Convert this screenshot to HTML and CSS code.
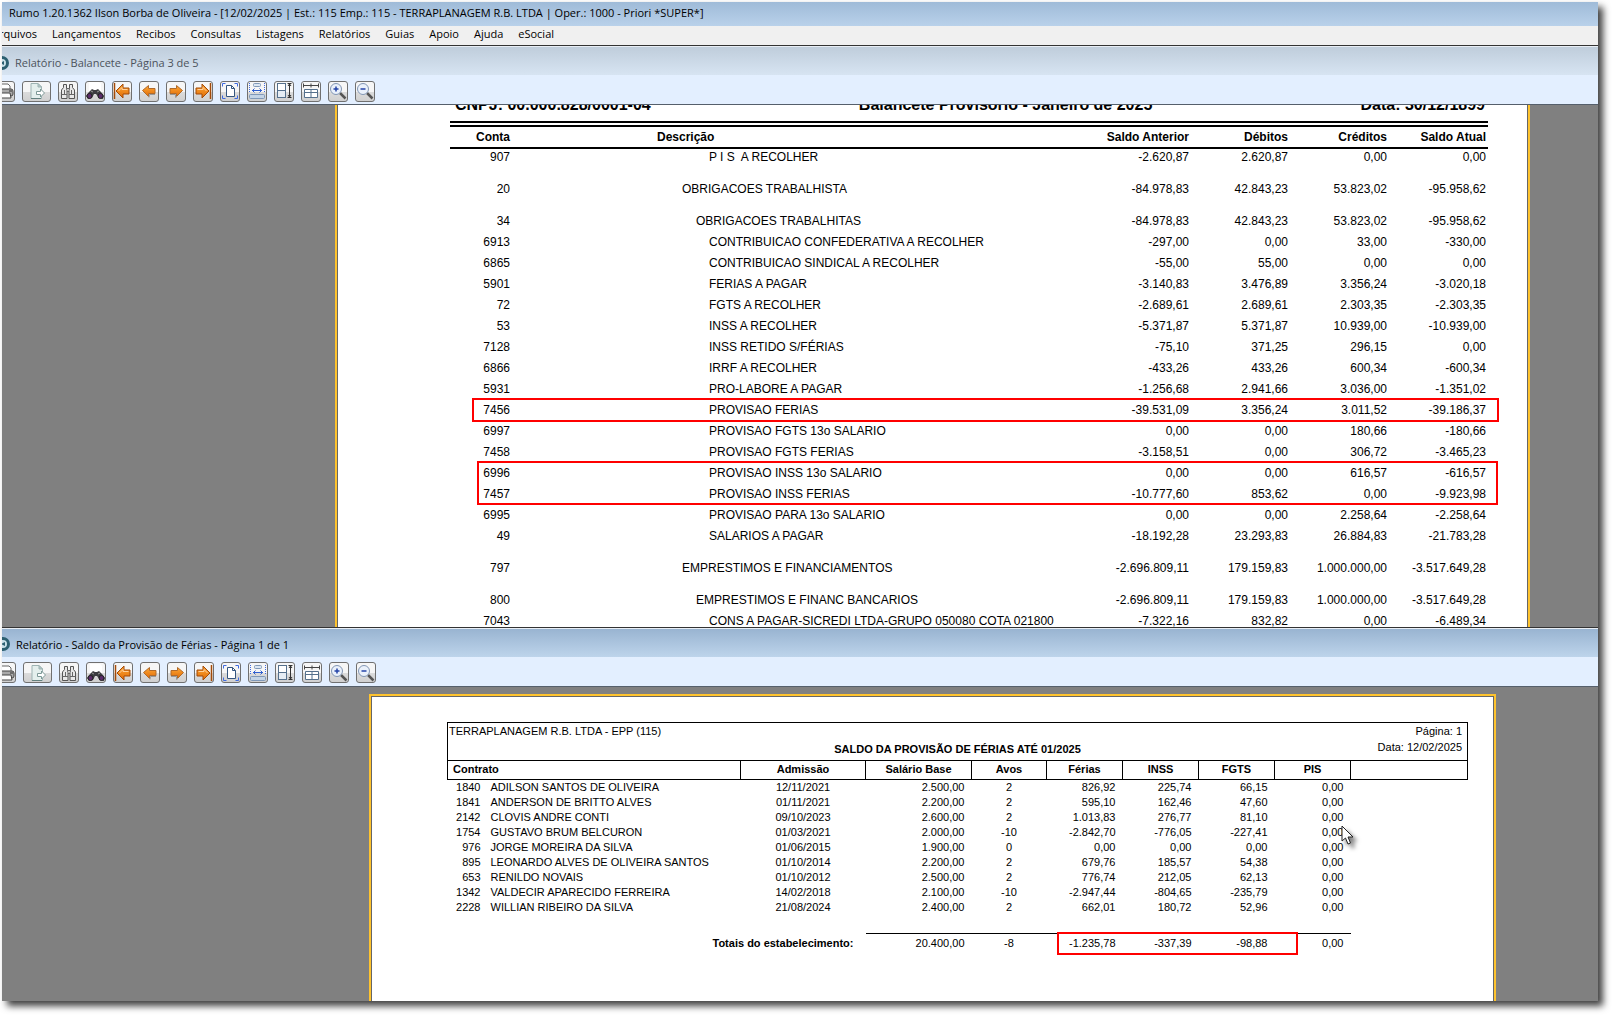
FILE: index.html
```html
<!DOCTYPE html>
<html lang="pt-BR">
<head>
  <meta charset="UTF-8">
  <title>Rumo 1.20.1362</title>
  <meta name="viewport" content="width=device-width, initial-scale=1.0">
  <link rel="stylesheet" href="styles.css">
</head>
<body>

<!-- Toolbar icons, shared by both report windows -->
<svg class="sprite" aria-hidden="true">
  <defs>
    <linearGradient id="orange" x1="0" y1="0" x2="0" y2="1">
      <stop offset="0" stop-color="#ffa836"/>
      <stop offset="1" stop-color="#e06c06"/>
    </linearGradient>
    <symbol id="i-print" viewBox="0 0 18 18">
      <path d="M4 7V2h8l2 2v3" fill="#fff" stroke="#666"/>
      <rect x="1" y="7" width="16" height="7" rx="2" fill="#aaa" stroke="#444"/>
      <path d="M4 11h10l1 5H3z" fill="#fff" stroke="#444"/>
      <path d="M13 9h3" stroke="#333"/>
    </symbol>
    <symbol id="i-export" viewBox="0 0 18 18">
      <path d="M3 1.500h7l3.500 3.500v11.500H3z" fill="#e4efed" stroke="#9db3b3"/>
      <path d="M10 1.500v3.500h3.500z" fill="#b5cac9" stroke="#9db3b3"/>
      <path d="M3 16.500h10" stroke="#63817f"/>
      <path d="M8.500 9.500h4v-2.500l4 4-4 4v-2.500h-4z" fill="#fff" stroke="#7d9997"/>
    </symbol>
    <symbol id="i-find" viewBox="0 0 18 18">
      <path d="M4.500 2.500h3v4l.5 2v8H2.500V8l2-2.500z" fill="#e8e8e8" stroke="#555"/>
      <path d="M13.500 2.500h-3v4l-.5 2v8h5.500V8l-2-2.500z" fill="#e8e8e8" stroke="#555"/>
      <path d="M7.500 6.500h3M8 9.500h2M2.500 12.500H8M10 12.500h5.500M5.500 8v4M12.500 8v4" stroke="#666"/>
    </symbol>
    <symbol id="i-findnext" viewBox="0 0 18 18">
      <path d="M3 0h10l2 2v7H3z" fill="#fff"/>
      <path d="M6 7l2 1h2l2-1 3 3 3 4-1 3-4-1-3-4H8l-2 4-4 1-2-3 3-4z" fill="#3c3c40"/>
      <path d="M5 9l2 1M11 10l2-1" stroke="#999"/>
      <ellipse cx="3.500" cy="14" rx="2.500" ry="2.500" fill="#5b2b6b" stroke="#222"/>
      <ellipse cx="14.500" cy="14" rx="2.500" ry="2.500" fill="#5b2b6b" stroke="#222"/>
    </symbol>
    <symbol id="i-first" viewBox="0 0 18 18">
      <path d="M1.500 1v16" stroke="#a34a08" stroke-width="1.500"/>
      <path d="M3 9l7-7v4h6v6h-6v4z" fill="url(#orange)" stroke="#a34a08"/>
      <path d="M5.500 9L9 5.500V7.500h5.500" fill="none" stroke="#ffd09a"/>
    </symbol>
    <symbol id="i-prev" viewBox="0 0 18 18">
      <path d="M2.500 8.500l6-5v3H15v5H8.500v3z" fill="url(#orange)" stroke="#b06a2a"/>
      <path d="M9 15.500l.5-3H15" fill="none" stroke="#999"/>
    </symbol>
    <symbol id="i-next" viewBox="0 0 18 18">
      <path d="M15.500 8.500l-6-5v3H3v5h6.500v3z" fill="url(#orange)" stroke="#b06a2a"/>
      <path d="M3 12.500h5.500v3l1.500-1" fill="none" stroke="#999"/>
    </symbol>
    <symbol id="i-last" viewBox="0 0 18 18">
      <path d="M16.500 1v16" stroke="#a34a08" stroke-width="1.500"/>
      <path d="M15 9L8 2v4H2v6h6v4z" fill="url(#orange)" stroke="#a34a08"/>
      <path d="M3.500 7.500H9V5.500L12.500 9" fill="none" stroke="#ffd09a"/>
    </symbol>
    <symbol id="i-page" viewBox="0 0 18 18">
      <path d="M5.500 3.500h5l3 3v8h-8z" fill="#fff" stroke="#34557f"/>
      <path d="M10.500 3.500v3h3" fill="none" stroke="#34557f"/>
      <path d="M1.500 4.500v-3h3M13.500 1.500h3v3M1.500 13.500v3h3M13.500 16.500h3v-3" fill="none" stroke="#3f6be0"/>
    </symbol>
    <symbol id="i-width" viewBox="0 0 18 18">
      <rect x="5.500" y="1.500" width="7" height="3" rx="1" fill="#dbe6f2" stroke="#7f98b8"/>
      <rect x="1.500" y="12.500" width="15" height="4" rx="1" fill="#c4d4e6" stroke="#7f98b8"/>
      <path d="M1.500 1v10M16.500 1v10" stroke="#3f6be0" stroke-dasharray="1 1"/>
      <path d="M4 8.500h10M6.500 6.500l-2 2 2 2M11.500 6.500l2 2-2 2" fill="none" stroke="#2f5fd0"/>
    </symbol>
    <symbol id="i-height" viewBox="0 0 18 18">
      <rect x="2.500" y="1.500" width="8" height="7" fill="#fff" stroke="#55708c"/>
      <rect x="2.500" y="8.500" width="8" height="7" fill="#e6edf4" stroke="#55708c"/>
      <path d="M14.500 2v13M12.500 1.500h4M12.500 15.500h4M13 4l1.500-2L16 4M13 13l1.500 2 1.500-2" fill="none" stroke="#333"/>
    </symbol>
    <symbol id="i-grid" viewBox="0 0 18 18">
      <path d="M2 3.500h14M1.500 1.500v4M16.500 1.500v4M9 1.500v4" stroke="#444"/>
      <path d="M2.500 7.500h13v8h-13z" fill="#fff" stroke="#55708c"/>
      <path d="M9 7.500v8M2.500 10.500h13" stroke="#55708c"/>
    </symbol>
    <symbol id="i-zoomin" viewBox="0 0 18 18">
      <path d="M11 11l5.500 5.500" stroke="#555" stroke-width="2.500"/>
      <circle cx="7" cy="7" r="5.500" fill="#eaf1fb" stroke="#8296b4"/>
      <path d="M4.500 7h5M7 4.500v5" stroke="#2443a8" stroke-width="1.500"/>
    </symbol>
    <symbol id="i-zoomout" viewBox="0 0 18 18">
      <path d="M11 11l5.500 5.500" stroke="#555" stroke-width="2.500"/>
      <circle cx="7" cy="7" r="5.500" fill="#eaf1fb" stroke="#8296b4"/>
      <path d="M4.500 7h5" stroke="#2443a8" stroke-width="1.500"/>
    </symbol>
    <symbol id="i-app" viewBox="0 0 14 14">
      <circle cx="7" cy="7" r="5.500" fill="#c9e0e8" stroke="#2c5f70" stroke-width="3"/>
      <path d="M5 7l4-2v4z" fill="#2c5f70"/>
    </symbol>
  </defs>
</svg>

<div class="app">
  <header class="app-title">Rumo 1.20.1362 Ilson Borba de Oliveira - [12/02/2025 | Est.: 115 Emp.: 115 - TERRAPLANAGEM R.B. LTDA | Oper.: 1000 - Priori *SUPER*]</header>

  <nav class="menu">
    <button type="button">Arquivos</button>
    <button type="button">Lançamentos</button>
    <button type="button">Recibos</button>
    <button type="button">Consultas</button>
    <button type="button">Listagens</button>
    <button type="button">Relatórios</button>
    <button type="button">Guias</button>
    <button type="button">Apoio</button>
    <button type="button">Ajuda</button>
    <button type="button">eSocial</button>
  </nav>

  <!-- Balancete -->
  <section class="window balancete">
    <h2 class="window-title inactive"><svg><use href="#i-app"/></svg>Relatório - Balancete - Página 3 de 5</h2>
    <div class="toolbar">
      <button type="button" aria-label="Imprimir"><svg><use href="#i-print"/></svg></button>
      <button type="button" class="wide" aria-label="Exportar"><svg><use href="#i-export"/></svg></button>
      <button type="button" aria-label="Localizar"><svg><use href="#i-find"/></svg></button>
      <button type="button" aria-label="Localizar próximo"><svg><use href="#i-findnext"/></svg></button>
      <button type="button" aria-label="Primeira página"><svg><use href="#i-first"/></svg></button>
      <button type="button" aria-label="Página anterior"><svg><use href="#i-prev"/></svg></button>
      <button type="button" aria-label="Próxima página"><svg><use href="#i-next"/></svg></button>
      <button type="button" aria-label="Última página"><svg><use href="#i-last"/></svg></button>
      <button type="button" aria-label="Página inteira"><svg><use href="#i-page"/></svg></button>
      <button type="button" aria-label="Ajustar largura"><svg><use href="#i-width"/></svg></button>
      <button type="button" aria-label="Ajustar altura"><svg><use href="#i-height"/></svg></button>
      <button type="button" aria-label="Várias páginas"><svg><use href="#i-grid"/></svg></button>
      <button type="button" aria-label="Aumentar zoom"><svg><use href="#i-zoomin"/></svg></button>
      <button type="button" aria-label="Diminuir zoom"><svg><use href="#i-zoomout"/></svg></button>
    </div>
    <div class="viewer">
      <div class="page">
        <div class="page-head">
          <span>CNPJ: 00.000.828/0001-04</span>
          <span>Balancete Provisorio - Janeiro de 2025</span>
          <span>Data: 30/12/1899</span>
        </div>
        <div class="sheet">
          <table class="accounts">
            <thead>
              <tr><th class="conta">Conta</th><th class="desc">Descrição</th><th class="valor">Saldo Anterior</th><th class="valor">Débitos</th><th class="valor">Créditos</th><th class="valor ultimo">Saldo Atual</th></tr>
            </thead>
            <tbody>
              <tr><td>907</td><td>P I S&nbsp; A RECOLHER</td><td>-2.620,87</td><td>2.620,87</td><td>0,00</td><td>0,00</td></tr>
              <tr class="grupo nivel1"><td>20</td><td>OBRIGACOES TRABALHISTA</td><td>-84.978,83</td><td>42.843,23</td><td>53.823,02</td><td>-95.958,62</td></tr>
              <tr class="grupo nivel2"><td>34</td><td>OBRIGACOES TRABALHITAS</td><td>-84.978,83</td><td>42.843,23</td><td>53.823,02</td><td>-95.958,62</td></tr>
              <tr><td>6913</td><td>CONTRIBUICAO CONFEDERATIVA A RECOLHER</td><td>-297,00</td><td>0,00</td><td>33,00</td><td>-330,00</td></tr>
              <tr><td>6865</td><td>CONTRIBUICAO SINDICAL A RECOLHER</td><td>-55,00</td><td>55,00</td><td>0,00</td><td>0,00</td></tr>
              <tr><td>5901</td><td>FERIAS A PAGAR</td><td>-3.140,83</td><td>3.476,89</td><td>3.356,24</td><td>-3.020,18</td></tr>
              <tr><td>72</td><td>FGTS A RECOLHER</td><td>-2.689,61</td><td>2.689,61</td><td>2.303,35</td><td>-2.303,35</td></tr>
              <tr><td>53</td><td>INSS A RECOLHER</td><td>-5.371,87</td><td>5.371,87</td><td>10.939,00</td><td>-10.939,00</td></tr>
              <tr><td>7128</td><td>INSS RETIDO S/FÉRIAS</td><td>-75,10</td><td>371,25</td><td>296,15</td><td>0,00</td></tr>
              <tr><td>6866</td><td>IRRF A RECOLHER</td><td>-433,26</td><td>433,26</td><td>600,34</td><td>-600,34</td></tr>
              <tr><td>5931</td><td>PRO-LABORE A PAGAR</td><td>-1.256,68</td><td>2.941,66</td><td>3.036,00</td><td>-1.351,02</td></tr>
              <tr><td>7456</td><td>PROVISAO FERIAS</td><td>-39.531,09</td><td>3.356,24</td><td>3.011,52</td><td>-39.186,37</td></tr>
              <tr><td>6997</td><td>PROVISAO FGTS 13o SALARIO</td><td>0,00</td><td>0,00</td><td>180,66</td><td>-180,66</td></tr>
              <tr><td>7458</td><td>PROVISAO FGTS FERIAS</td><td>-3.158,51</td><td>0,00</td><td>306,72</td><td>-3.465,23</td></tr>
              <tr><td>6996</td><td>PROVISAO INSS 13o SALARIO</td><td>0,00</td><td>0,00</td><td>616,57</td><td>-616,57</td></tr>
              <tr><td>7457</td><td>PROVISAO INSS FERIAS</td><td>-10.777,60</td><td>853,62</td><td>0,00</td><td>-9.923,98</td></tr>
              <tr><td>6995</td><td>PROVISAO PARA 13o SALARIO</td><td>0,00</td><td>0,00</td><td>2.258,64</td><td>-2.258,64</td></tr>
              <tr><td>49</td><td>SALARIOS A PAGAR</td><td>-18.192,28</td><td>23.293,83</td><td>26.884,83</td><td>-21.783,28</td></tr>
              <tr class="grupo nivel1"><td>797</td><td>EMPRESTIMOS E FINANCIAMENTOS</td><td>-2.696.809,11</td><td>179.159,83</td><td>1.000.000,00</td><td>-3.517.649,28</td></tr>
              <tr class="grupo nivel2"><td>800</td><td>EMPRESTIMOS E FINANC BANCARIOS</td><td>-2.696.809,11</td><td>179.159,83</td><td>1.000.000,00</td><td>-3.517.649,28</td></tr>
              <tr><td>7043</td><td>CONS A PAGAR-SICREDI LTDA-GRUPO 050080 COTA 021800</td><td>-7.322,16</td><td>832,82</td><td>0,00</td><td>-6.489,34</td></tr>
            </tbody>
          </table>
          <div class="mark mark-ferias"></div>
          <div class="mark mark-inss"></div>
        </div>
      </div>
    </div>
  </section>

  <!-- Saldo da provisão de férias -->
  <section class="window provisao">
    <h2 class="window-title"><svg><use href="#i-app"/></svg>Relatório - Saldo da Provisão de Férias - Página 1 de 1</h2>
    <div class="toolbar">
      <button type="button" aria-label="Imprimir"><svg><use href="#i-print"/></svg></button>
      <button type="button" class="wide" aria-label="Exportar"><svg><use href="#i-export"/></svg></button>
      <button type="button" aria-label="Localizar"><svg><use href="#i-find"/></svg></button>
      <button type="button" aria-label="Localizar próximo"><svg><use href="#i-findnext"/></svg></button>
      <button type="button" aria-label="Primeira página"><svg><use href="#i-first"/></svg></button>
      <button type="button" aria-label="Página anterior"><svg><use href="#i-prev"/></svg></button>
      <button type="button" aria-label="Próxima página"><svg><use href="#i-next"/></svg></button>
      <button type="button" aria-label="Última página"><svg><use href="#i-last"/></svg></button>
      <button type="button" aria-label="Página inteira"><svg><use href="#i-page"/></svg></button>
      <button type="button" aria-label="Ajustar largura"><svg><use href="#i-width"/></svg></button>
      <button type="button" aria-label="Ajustar altura"><svg><use href="#i-height"/></svg></button>
      <button type="button" aria-label="Várias páginas"><svg><use href="#i-grid"/></svg></button>
      <button type="button" aria-label="Aumentar zoom"><svg><use href="#i-zoomin"/></svg></button>
      <button type="button" aria-label="Diminuir zoom"><svg><use href="#i-zoomout"/></svg></button>
    </div>
    <div class="viewer">
      <div class="page">
        <div class="sheet">
          <div class="report-head">
            <span class="empresa">TERRAPLANAGEM R.B. LTDA - EPP (115)</span>
            <strong class="titulo">SALDO DA PROVISÃO DE FÉRIAS ATÉ 01/2025</strong>
            <div class="emissao">
              <span>Página: 1</span>
              <span>Data: 12/02/2025</span>
            </div>
          </div>
          <table class="contracts">
            <colgroup>
              <col class="c-num"><col><col class="c-adm"><col class="c-sal">
              <col class="c-avos"><col class="c-val"><col class="c-val"><col class="c-val"><col class="c-val"><col class="c-fim">
            </colgroup>
            <thead>
              <tr><th colspan="2" class="contrato">Contrato</th><th>Admissão</th><th>Salário Base</th><th>Avos</th><th>Férias</th><th>INSS</th><th>FGTS</th><th>PIS</th><th></th></tr>
            </thead>
            <tbody>
              <tr><td>1840</td><td>ADILSON SANTOS DE OLIVEIRA</td><td>12/11/2021</td><td>2.500,00</td><td>2</td><td>826,92</td><td>225,74</td><td>66,15</td><td>0,00</td><td></td></tr>
              <tr><td>1841</td><td>ANDERSON DE BRITTO ALVES</td><td>01/11/2021</td><td>2.200,00</td><td>2</td><td>595,10</td><td>162,46</td><td>47,60</td><td>0,00</td><td></td></tr>
              <tr><td>2142</td><td>CLOVIS ANDRE CONTI</td><td>09/10/2023</td><td>2.600,00</td><td>2</td><td>1.013,83</td><td>276,77</td><td>81,10</td><td>0,00</td><td></td></tr>
              <tr><td>1754</td><td>GUSTAVO BRUM BELCURON</td><td>01/03/2021</td><td>2.000,00</td><td>-10</td><td>-2.842,70</td><td>-776,05</td><td>-227,41</td><td>0,00</td><td></td></tr>
              <tr><td>976</td><td>JORGE MOREIRA DA SILVA</td><td>01/06/2015</td><td>1.900,00</td><td>0</td><td>0,00</td><td>0,00</td><td>0,00</td><td>0,00</td><td></td></tr>
              <tr><td>895</td><td>LEONARDO ALVES DE OLIVEIRA SANTOS</td><td>01/10/2014</td><td>2.200,00</td><td>2</td><td>679,76</td><td>185,57</td><td>54,38</td><td>0,00</td><td></td></tr>
              <tr><td>653</td><td>RENILDO NOVAIS</td><td>01/10/2012</td><td>2.500,00</td><td>2</td><td>776,74</td><td>212,05</td><td>62,13</td><td>0,00</td><td></td></tr>
              <tr><td>1342</td><td>VALDECIR APARECIDO FERREIRA</td><td>14/02/2018</td><td>2.100,00</td><td>-10</td><td>-2.947,44</td><td>-804,65</td><td>-235,79</td><td>0,00</td><td></td></tr>
              <tr><td>2228</td><td>WILLIAN RIBEIRO DA SILVA</td><td>21/08/2024</td><td>2.400,00</td><td>2</td><td>662,01</td><td>180,72</td><td>52,96</td><td>0,00</td><td></td></tr>
            </tbody>
            <tfoot>
              <tr class="espaco"><td colspan="10"></td></tr>
              <tr class="totais"><th colspan="3">Totais do estabelecimento:</th><td>20.400,00</td><td>-8</td><td>-1.235,78</td><td>-337,39</td><td>-98,88</td><td>0,00</td></tr>
            </tfoot>
          </table>
          <div class="mark mark-totais"></div>
          <svg class="cursor" viewBox="0 0 14 20" aria-hidden="true">
            <path d="M1 1v15l3.500-3 2.500 6 2.500-1-2.500-6h5z" fill="#fff" stroke="#222"/>
          </svg>
        </div>
      </div>
    </div>
  </section>
</div>

</body>
</html>
```

FILE: styles.css
```css
* {
  box-sizing: border-box;
}

body {
  margin: 0;
  height: 100vh;
  display: flex;
  background: #fff;
  overflow: hidden;
  font-family: "Open Sans", "Noto Sans", sans-serif;
  font-size: 11px;
  color: #000;
}

button {
  font: inherit;
  color: inherit;
}

.sprite {
  position: absolute;
  width: 0;
  height: 0;
}

.app {
  flex: 1;
  min-width: 0;
  margin: 2px 14px 14px 2px;
  display: flex;
  flex-direction: column;
  overflow: hidden;
  box-shadow: 5px 5px 7px rgba(0, 0, 0, 0.75);
}

.app-title {
  height: 24px;
  padding-left: 7px;
  line-height: 22px;
  white-space: nowrap;
  background: linear-gradient(#9fbbd8, #b9d1ea);
}

.menu {
  height: 20px;
  display: flex;
  align-items: flex-start;
  gap: 15px;
  padding-left: 38px;
  margin-left: -48px;
  background: #f0f0f0;
  border-bottom: 1px solid #333;
}

.menu button {
  padding: 0;
  border: 0;
  background: none;
  line-height: 16px;
}

/* Report windows */

.window {
  display: flex;
  flex-direction: column;
  min-height: 0;
}

.balancete {
  flex: 582 1 0;
}

.provisao {
  flex: 374 1 0;
  border-top: 1px solid #333;
}

.window-title {
  height: 29px;
  margin: 0;
  padding-top: 3px;
  display: flex;
  align-items: center;
  gap: 6px;
  font-size: 11px;
  font-weight: normal;
  border-top: 1px solid #e8eef5;
  background: linear-gradient(#99b4d1, #bdd4eb);
}

.window-title svg {
  width: 14px;
  height: 14px;
  margin-left: -7px;
}

.window-title.inactive {
  color: #4c535c;
  background: linear-gradient(#bfcddb, #d7e4f2);
}

.toolbar {
  height: 30px;
  padding-top: 3px;
  display: flex;
  align-items: center;
  gap: 7px;
  margin-left: -7px;
  background: #e3efff;
  border-bottom: 1px solid #555f6b;
}

.provisao .window-title,
.provisao .toolbar {
  padding-left: 1px;
}

.toolbar button {
  width: 20px;
  height: 21px;
  padding: 0;
  display: flex;
  align-items: center;
  justify-content: center;
  border: 1px solid #707070;
  border-radius: 3px;
  background: linear-gradient(#f6f6f6 50%, #dcdcdc 50%, #d0d0d0);
}

.toolbar .wide {
  width: 29px;
}

.toolbar svg {
  width: 18px;
  height: 18px;
}

.viewer {
  flex: 1;
  min-height: 0;
  overflow: hidden;
  background: #808080;
}

.page {
  background: #fff;
  border: 2px solid #fec32e;
  outline: 1px solid #666;
  outline-offset: -3px;
  font-family: "Liberation Sans", Arial, sans-serif;
}

.sheet {
  position: relative;
}

.mark {
  position: absolute;
  border: 2px solid #f00;
}

/* Balancete */

/* scrolled down inside the viewer */
.balancete .page {
  margin: -40px 68px 0 333px;
  padding: 35px 40px 200px 113px;
}

.page-head {
  display: flex;
  justify-content: space-between;
  padding: 0 3px 13px 5px;
  font-size: 16px;
  line-height: 6px;
  font-weight: bold;
}

.accounts {
  width: 100%;
  table-layout: fixed;
  border-collapse: separate;
  border-spacing: 0;
  font-size: 12px;
}

.accounts th {
  height: 28px;
  padding: 0;
  line-height: 20px;
  border-top: 6px double #000;
  border-bottom: 2px solid #000;
}

.accounts td {
  padding: 0 0 4px;
  line-height: 17px;
  text-align: right;
  white-space: nowrap;
}

.accounts .conta {
  width: 60px;
  text-align: right;
}

.accounts .desc {
  padding-left: 147px;
  text-align: left;
}

.accounts .valor {
  width: 99px;
  text-align: right;
}

.accounts .ultimo {
  width: 101px;
}

.accounts .ultimo,
.accounts td:last-child {
  padding-right: 2px;
}

.accounts td:nth-child(2) {
  padding-left: 199px;
  text-align: left;
}

.accounts .nivel1 td:nth-child(2) {
  padding-left: 172px;
}

.accounts .nivel2 td:nth-child(2) {
  padding-left: 186px;
}

.accounts .grupo td {
  padding-top: 11px;
}

.mark-ferias {
  top: 277px;
  left: 22px;
  right: -11px;
  height: 24px;
}

.mark-inss {
  top: 340px;
  left: 27px;
  right: -10px;
  height: 44px;
}

/* Saldo da provisão */

.provisao .page {
  height: 100%;
  margin: 7px 102px 0 367px;
  padding: 26px 26px 0 76px;
  font-size: 11px;
}

.report-head {
  height: 38px;
  display: grid;
  grid-template-columns: 1fr auto 1fr;
  border: 1px solid #000;
  border-bottom: 0;
  line-height: 16px;
}

.empresa {
  padding-left: 1px;
}

.titulo {
  align-self: end;
  line-height: 22px;
}

.emissao {
  display: flex;
  flex-direction: column;
  align-items: flex-end;
  padding-right: 5px;
}

.contracts {
  width: 100%;
  table-layout: fixed;
  border-collapse: collapse;
  font-size: 11px;
}

.c-num { width: 33px; }
.c-adm { width: 125px; }
.c-sal { width: 106px; }
.c-avos { width: 75px; }
.c-val { width: 76px; }
.c-fim { width: 117px; }

.contracts th {
  height: 19px;
  padding: 0;
  border: 1px solid #000;
  line-height: 15px;
}

.contracts .contrato {
  padding-left: 5px;
  text-align: left;
}

.contracts td {
  padding: 0 7px 0 0;
  line-height: 15px;
  text-align: right;
  white-space: nowrap;
}

.contracts td:first-child {
  padding-right: 0;
}

.contracts tbody td:nth-child(2) {
  padding-left: 10px;
  text-align: left;
}

.contracts tbody td:nth-child(3),
.contracts tbody td:nth-child(5),
.totais td:nth-child(3) {
  padding-right: 0;
  text-align: center;
}

.contracts .espaco td {
  height: 19px;
}

.contracts .totais th {
  padding-right: 12px;
  border: 0;
  text-align: right;
}

.contracts .totais td {
  border-top: 1px solid #000;
}

.mark-totais {
  top: 210px;
  right: 170px;
  width: 241px;
  height: 23px;
}

.cursor {
  position: absolute;
  top: 103px;
  right: 113px;
  width: 14px;
  height: 20px;
  filter: drop-shadow(4px 4px 2px rgba(0, 0, 0, 0.5));
}
```
